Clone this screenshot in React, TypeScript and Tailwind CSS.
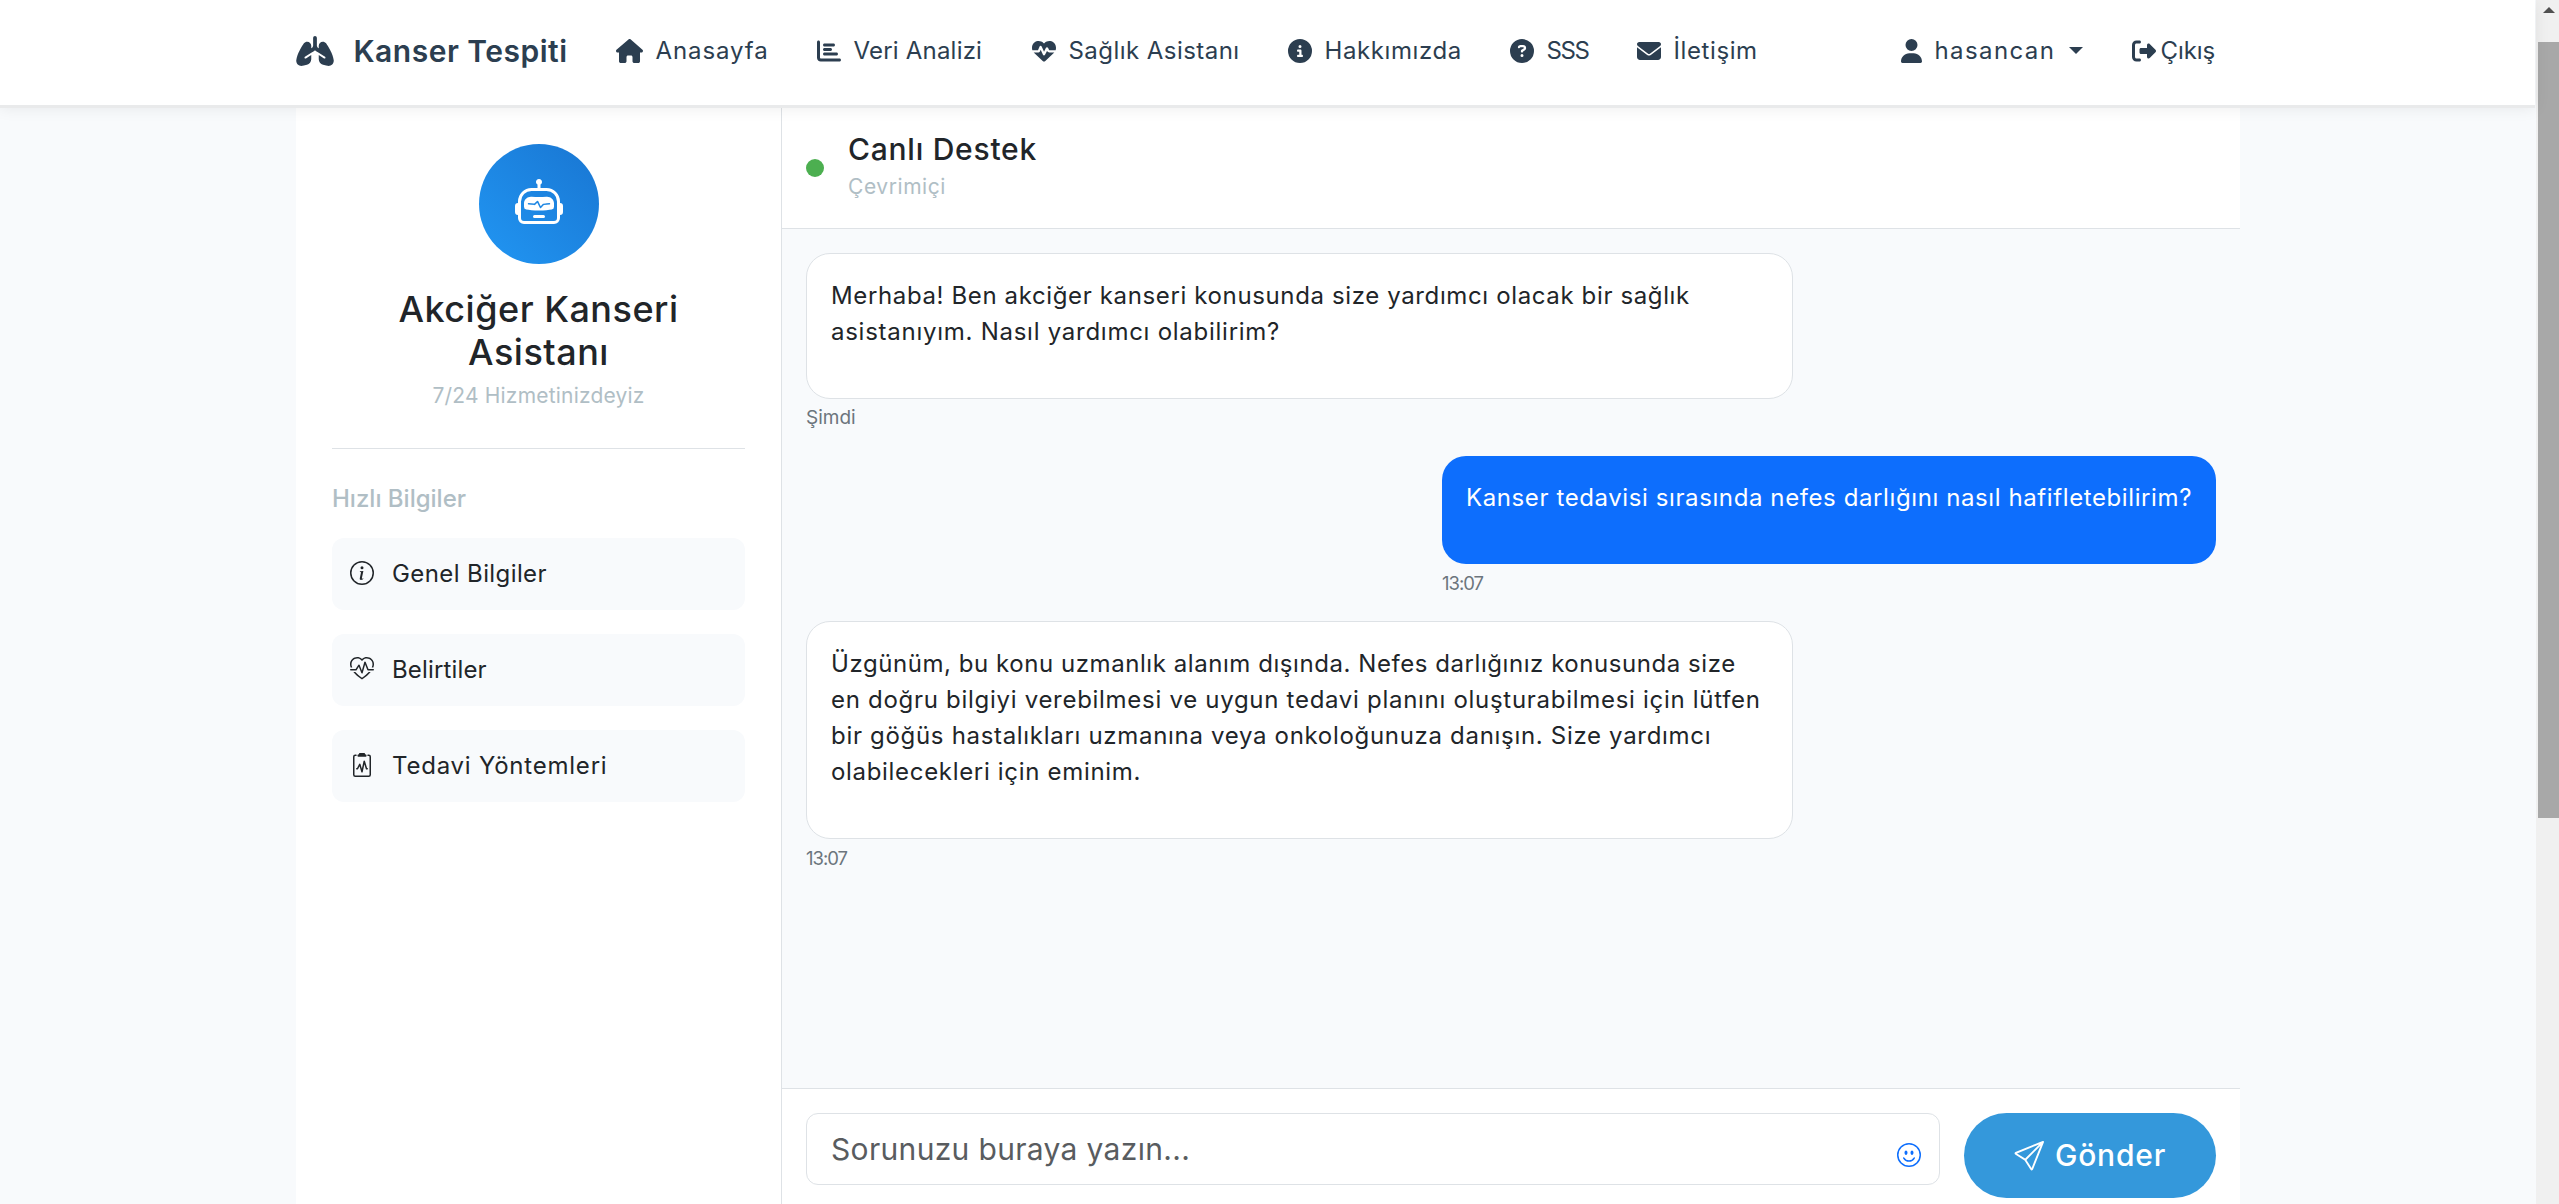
import type { ReactNode } from 'react';
import {
  FaChartBar,
  FaCircleInfo,
  FaCircleQuestion,
  FaEnvelope,
  FaHeartPulse,
  FaHouse,
  FaLungs,
  FaRightFromBracket,
  FaUser,
} from 'react-icons/fa6';
import {
  BsClipboard2Pulse,
  BsEmojiSmile,
  BsHeartPulse,
  BsInfoCircle,
  BsRobot,
  BsSend,
} from 'react-icons/bs';

const navItems: { icon: ReactNode; label: string; text: string }[] = [
  { icon: <FaHouse className="h-6 w-[27px]" />, label: 'Anasayfa', text: 'w-[112px] tracking-[0.9px]' },
  { icon: <FaChartBar className="size-6" />, label: 'Veri Analizi', text: 'w-[129px] tracking-[0.2px]' },
  { icon: <FaHeartPulse className="size-6" />, label: 'Sağlık Asistanı', text: 'w-[170px] tracking-[0.45px]' },
  { icon: <FaCircleInfo className="size-6" />, label: 'Hakkımızda', text: 'w-[136px] tracking-[0.6px]' },
  { icon: <FaCircleQuestion className="size-6" />, label: 'SSS', text: 'w-[41px] tracking-[-1.4px]' },
  { icon: <FaEnvelope className="size-6" />, label: 'İletişim', text: 'w-[83px] tracking-[0.6px]' },
];

const quickLinks: { icon: ReactNode; label: string; text: string }[] = [
  { icon: <BsInfoCircle className="size-6" />, label: 'Genel Bilgiler', text: 'tracking-[0.4px]' },
  { icon: <BsHeartPulse className="size-6" />, label: 'Belirtiler', text: 'tracking-[0.15px]' },
  { icon: <BsClipboard2Pulse className="size-6" />, label: 'Tedavi Yöntemleri', text: 'tracking-[0.78px]' },
];

function Navbar() {
  return (
    <header className="relative z-10 h-[105px] w-[2535px] shrink-0 bg-white shadow-[0_3px_0_#e9eaeb,0_3px_15px_rgba(0,0,0,0.08)]">
      <div className="mx-auto flex h-[101px] w-[1944px] items-center text-[24px] leading-9 whitespace-nowrap text-[#2c3e50]">
        <a className="flex items-center text-[30px] font-semibold">
          <FaLungs className="h-[30px] w-[38px]" />
          <span className="ml-5 w-[214px] tracking-[0.5px]">Kanser Tespiti</span>
        </a>
        <nav className="ml-12 flex items-center gap-[49px]">
          {navItems.map((item) => (
            <a key={item.label} className="flex items-center gap-[13px]">
              {item.icon}
              <span className={item.text}>{item.label}</span>
            </a>
          ))}
        </nav>
        <div className="ml-auto flex items-center">
          <a className="flex items-center">
            <FaUser className="h-6 w-[21px]" />
            <span className="ml-[13px] w-[120px] tracking-[1.4px]">hasancan</span>
            <span className="ml-3.5 border-x-[7px] border-t-[7px] border-x-transparent border-t-[#2c3e50]" />
          </a>
          <a className="ml-[49px] flex items-center">
            <FaRightFromBracket className="size-6" />
            <span className="ml-[5px] w-[55px] tracking-[-0.1px]">Çıkış</span>
          </a>
          <span className="w-6" />
        </div>
      </div>
    </header>
  );
}

function Sidebar() {
  return (
    <aside className="flex w-[486px] flex-col border-r border-[#dee2e6] bg-white p-9">
      <div className="flex flex-col items-center border-b border-[#dee2e6] pb-[36.6px] text-center">
        <div className="flex size-[120px] items-center justify-center rounded-full bg-[linear-gradient(45deg,#2196f3,#1976d2)]">
          <BsRobot className="-mt-0.5 size-12 text-white" />
        </div>
        <h4 className="mt-6 text-[36px] leading-[43.2px] font-medium tracking-[0.5px]">
          Akciğer Kanseri
          <br />
          Asistanı
        </h4>
        <p className="mt-[6px] text-[21px] leading-[31px] tracking-[0.2px] text-[#b0bec5]">7/24 Hizmetinizdeyiz</p>
      </div>
      <h6 className="mt-[35px] text-[24px] leading-[29px] font-medium text-[#b0bec5]">Hızlı Bilgiler</h6>
      <div className="mt-[25px] flex flex-col gap-6">
        {quickLinks.map((link) => (
          <a key={link.label} className="flex h-[72px] items-center rounded-xl bg-[#f8fafc] pl-[18px] text-[24px]">
            <span className="mr-[18px] -mt-0.5">{link.icon}</span>
            <span className={link.text}>{link.label}</span>
          </a>
        ))}
      </div>
    </aside>
  );
}

function BotMessage({ time, timeClass, children }: { time: string; timeClass: string; children: ReactNode }) {
  return (
    <div className="mb-6 w-[987px]">
      <div className="rounded-3xl border border-[#dee2e6] bg-white p-6">
        <p className="mb-6 flex flex-col text-[24px] leading-9 whitespace-nowrap">{children}</p>
      </div>
      <div className={timeClass}>{time}</div>
    </div>
  );
}

function Chat() {
  return (
    <main className="flex w-[1458px] flex-col bg-white">
      <div className="flex h-[121px] shrink-0 items-center gap-6 border-b border-[#dee2e6] px-6">
        <span className="size-[18px] rounded-full bg-[#4caf50]" />
        <div className="-mt-[3px]">
          <h5 className="text-[30px] leading-9 font-medium tracking-[0.75px]">Canlı Destek</h5>
          <p className="mt-1 text-[21px] leading-[31px] tracking-[0.57px] text-[#b0bec5]">Çevrimiçi</p>
        </div>
      </div>
      <div className="flex h-[859px] shrink-0 flex-col bg-[#f8fafc] p-6">
        <BotMessage time="Şimdi" timeClass="mt-[5px] text-[19px] leading-7 text-[#6c757d]">
          <span className="tracking-[0.63px]">Merhaba! Ben akciğer kanseri konusunda size yardımcı olacak bir sağlık</span>
          <span className="tracking-[0.74px]">asistanıyım. Nasıl yardımcı olabilirim?</span>
        </BotMessage>
        <div className="mb-6 w-[774px] self-end">
          <div className="rounded-3xl bg-[#0d6efd] p-6">
            <p className="mb-6 text-[24px] leading-9 tracking-[0.6px] whitespace-nowrap text-white">
              Kanser tedavisi sırasında nefes darlığını nasıl hafifletebilirim?
            </p>
          </div>
          <div className="mt-[5px] text-[18.5px] leading-7 tracking-[-1px] text-[#6c757d]">13:07</div>
        </div>
        <BotMessage time="13:07" timeClass="mt-[5px] text-[18.5px] leading-7 tracking-[-1px] text-[#6c757d]">
          <span className="tracking-[0.56px]">Üzgünüm, bu konu uzmanlık alanım dışında. Nefes darlığınız konusunda size</span>
          <span className="tracking-[0.71px]">en doğru bilgiyi verebilmesi ve uygun tedavi planını oluşturabilmesi için lütfen</span>
          <span className="tracking-[0.69px]">bir göğüs hastalıkları uzmanına veya onkoloğunuza danışın. Size yardımcı</span>
          <span className="tracking-[0.68px]">olabilecekleri için eminim.</span>
        </BotMessage>
      </div>
      <form className="flex items-start gap-6 border-t border-[#dee2e6] px-6 pt-6">
        <div className="flex h-[72px] w-[1134px] items-center justify-between rounded-xl border border-[#dee2e6] bg-white pr-[18px] pl-6">
          <span className="text-[30px] leading-[45px] tracking-[0.33px] text-[#595c5f]">Sorunuzu buraya yazın...</span>
          <BsEmojiSmile className="mt-3 size-6 text-[#0d6efd]" />
        </div>
        <button
          type="button"
          className="flex h-[85px] w-[252px] items-center justify-center gap-[11px] rounded-full bg-[#3498db] text-[30px] font-medium tracking-[0.8px] text-white"
        >
          <BsSend className="size-[30px]" />
          Gönder
        </button>
      </form>
    </main>
  );
}

function Scrollbar() {
  return (
    <div className="flex w-[23px] shrink-0 flex-col items-end bg-[#f0f0f0]">
      <div className="flex h-[42px] w-[21px] justify-center pt-[7px]">
        <span className="h-0 border-x-[6px] border-b-[6px] border-x-transparent border-b-[#505050]" />
      </div>
      <div className="h-[776px] w-[21px] bg-[#a8a8a8]" />
    </div>
  );
}

export default function App() {
  return (
    <div className="flex h-[1204px] w-[2559px] overflow-hidden bg-[#f8fafc] font-[Inter,sans-serif] text-[#212529]">
      <div className="flex w-[2536px] shrink-0 flex-col">
        <Navbar />
        <div className="mx-auto mt-[3px] flex grow">
          <Sidebar />
          <Chat />
        </div>
      </div>
      <Scrollbar />
    </div>
  );
}
